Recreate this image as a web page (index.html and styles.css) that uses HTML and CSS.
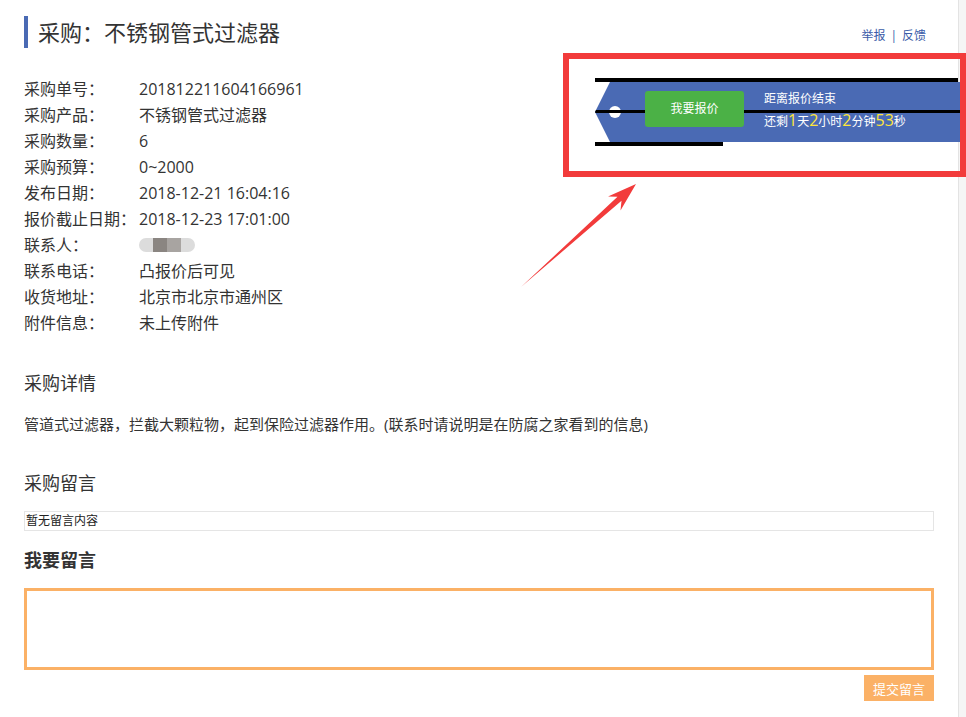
FILE: index.html
```html
<!DOCTYPE html>
<html lang="zh-CN">

<head>
     <meta charset="UTF-8">
     <meta name="viewport" content="width=device-width, initial-scale=1.0">
     <title>采购：不锈钢管式过滤器</title>
     <link rel="stylesheet" href="styles.css">
</head>

<body>
     <div class="page">
          <div class="main">
               <div class="head">
                    <h1 class="title">采购：不锈钢管式过滤器</h1>
                    <div class="links"><a href="#">举报</a><span class="sep">|</span><a href="#">反馈</a></div>
               </div>

               <div class="summary">
                    <ul class="info">
                         <li><span class="label">采购单号：</span><span class="value">201812211604166961</span></li>
                         <li><span class="label">采购产品：</span><span class="value">不锈钢管式过滤器</span></li>
                         <li><span class="label">采购数量：</span><span class="value">6</span></li>
                         <li><span class="label">采购预算：</span><span class="value">0~2000</span></li>
                         <li><span class="label">发布日期：</span><span class="value">2018-12-21 16:04:16</span></li>
                         <li><span class="label">报价截止日期：</span><span class="value">2018-12-23 17:01:00</span></li>
                         <li><span class="label">联系人：</span><span class="value"><span class="blur"><i></i><i class="dark"></i><i class="mid"></i><i></i></span></span></li>
                         <li><span class="label">联系电话：</span><span class="value">凸报价后可见</span></li>
                         <li><span class="label">收货地址：</span><span class="value">北京市北京市通州区</span></li>
                         <li><span class="label">附件信息：</span><span class="value">未上传附件</span></li>
                    </ul>

                    <!-- 报价倒计时 -->
                    <div class="quote">
                         <div class="line-top"></div>
                         <div class="band">
                              <span class="dot"></span>
                              <a class="quote-btn" href="#">我要报价</a>
                              <div class="countdown">
                                   <p>距离报价结束</p>
                                   <p class="remain">还剩<em>1</em>天<em>2</em>小时<em>2</em>分钟<em>53</em>秒</p>
                              </div>
                         </div>
                         <div class="line-bottom"></div>
                    </div>
               </div>

               <h2 class="section-title">采购详情</h2>
               <p class="detail">管道式过滤器，拦截大颗粒物，起到保险过滤器作用。(联系时请说明是在防腐之家看到的信息)</p>

               <h2 class="section-title">采购留言</h2>
               <div class="msg-list">暂无留言内容</div>

               <h3 class="form-title">我要留言</h3>
               <textarea class="msg-input"></textarea>
               <div class="form-actions"><button class="submit">提交留言</button></div>
          </div>
          <div class="rail"></div>

          <!-- 截图标注 -->
          <svg class="mark" width="966" height="717" viewBox="0 0 966 717">
               <rect x="566" y="56" width="397" height="118" fill="none" stroke="#f23b3b" stroke-width="6" />
               <polygon points="521,287 621.5,200.8 620.5,210.5 636,184 608,196.5 617.5,196.8" fill="#f23b3b" />
          </svg>
     </div>
</body>

</html>
```

FILE: styles.css
```css
body {
     margin: 0;
     font-family: "Open Sans", "Noto Sans CJK SC", sans-serif;
     color: #333;
     background: #fff;
}

.page {
     position: relative;
     display: flex;
     min-height: 100vh;
     overflow: hidden;
}

.main {
     width: 958px;
     flex: none;
     padding: 0 24px;
     box-sizing: border-box;
}

.rail {
     flex: 1;
     background-color: #f5f5f5;
     border-left: 1px solid #e3e3e3;
}

.head {
     display: flex;
     justify-content: space-between;
     margin-top: 16px;
}

.title {
     margin: 0;
     height: 32px;
     line-height: 32px;
     padding-left: 10px;
     border-left: 4px solid #4a6ab4;
     font-size: 22px;
     font-weight: normal;
     color: #333;
}

.links {
     align-self: flex-end;
     margin: 0 8px 2px 0;
     font-size: 12px;
     line-height: 20px;
}

.links a {
     color: #3b5ca8;
     text-decoration: none;
}

.links .sep {
     margin: 0 5px;
     color: #3b5ca8;
}

.summary {
     display: flex;
     margin-top: 28px;
}

.info {
     flex: 1;
     list-style: none;
     margin: 0;
     padding: 0;
     font-size: 16px;
     line-height: 26px;
}

.info li {
     display: flex;
     height: 26px;
}

.info .label {
     width: 115px;
     flex: none;
}

.blur {
     display: inline-flex;
     margin-top: 6px;
     height: 14px;
     border-radius: 7px;
     overflow: hidden;
}

.blur i {
     width: 14px;
     background-color: #dcdcdc;
}

.blur i.dark {
     background-color: #8a8581;
}

.blur i.mid {
     background-color: #a8a4a1;
}

/* 报价区 */
.quote {
     width: 365px;
     flex: none;
     margin: 2px -26px 0 0;
}

.line-top {
     height: 4px;
     background: #000;
}

.line-bottom {
     width: 128px;
     height: 4px;
     background: #000;
}

.band {
     position: relative;
     display: flex;
     align-items: flex-start;
     height: 60px;
     padding: 9px 0 0 50px;
     box-sizing: border-box;
     background-color: #4a6ab4;
     clip-path: polygon(15px 0, 100% 0, 100% 100%, 15px 100%, 0 50%);
}

.band::after {
     content: "";
     position: absolute;
     left: 0;
     right: 0;
     top: 28px;
     height: 3px;
     background: #000;
}

.dot {
     position: absolute;
     left: 14px;
     top: 24px;
     width: 12px;
     height: 12px;
     border-radius: 50%;
     background: #fff;
}

.quote-btn {
     position: relative;
     z-index: 1;
     width: 99px;
     height: 36px;
     line-height: 36px;
     margin-right: 20px;
     text-align: center;
     border-radius: 3px;
     background-color: #4bb146;
     color: #fff;
     font-size: 12px;
     text-decoration: none;
}

.countdown {
     margin-top: -2px;
     color: #fff;
     font-size: 12px;
}

.countdown p {
     margin: 0;
     line-height: 20px;
}

.countdown .remain {
     line-height: 22px;
}

.countdown em {
     font-style: normal;
     font-size: 16px;
     color: #ffe53b;
}

/* 详情与留言 */
.section-title {
     margin: 35px 0 0;
     font-size: 18px;
     font-weight: normal;
     line-height: 24px;
     color: #333;
}

.detail {
     margin: 17px 0 0;
     font-size: 15px;
     line-height: 24px;
}

.msg-list {
     margin-top: 16px;
     height: 18px;
     line-height: 18px;
     padding-left: 1px;
     border: 1px solid #e5e5e5;
     font-size: 12px;
     color: #222;
}

.form-title {
     margin: 17px 0 0;
     font-size: 18px;
     font-weight: bold;
     line-height: 24px;
     color: #333;
}

.msg-input {
     display: block;
     width: 100%;
     height: 82px;
     margin-top: 16px;
     box-sizing: border-box;
     border: 3px solid #fbb166;
     resize: none;
     outline: none;
}

.form-actions {
     display: flex;
     justify-content: flex-end;
     margin-top: 5px;
}

.submit {
     width: 70px;
     height: 26px;
     padding: 0;
     border: none;
     background-color: #fbb166;
     color: #fff;
     font-family: inherit;
     font-size: 13px;
     cursor: pointer;
}

.mark {
     position: absolute;
     left: 0;
     top: 0;
     pointer-events: none;
}
```
